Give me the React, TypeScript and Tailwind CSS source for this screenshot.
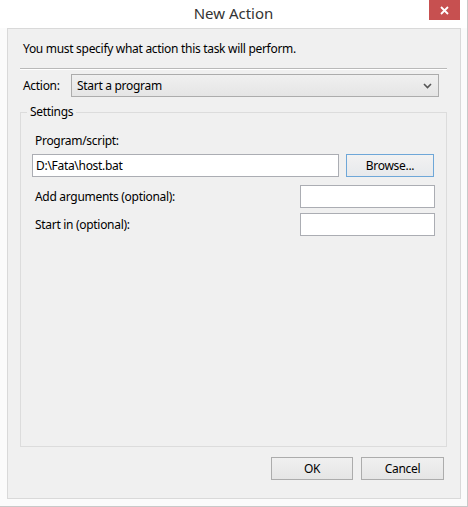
import React from "react";

const font = { fontFamily: '"Noto Sans", "Open Sans", Arial, sans-serif' };

const TextBox = ({ value = "", className = "" }: { value?: string; className?: string }) => (
  <div
    className={`h-[23px] border border-[#abadb3] bg-white px-[3px] flex items-center text-[12px] text-black ${className}`}
  >
    {value}
  </div>
);

const DialogButton = ({ label, focused = false, className = "" }: { label: string; focused?: boolean; className?: string }) => (
  <div
    className={`h-[23px] flex items-center justify-center text-[12px] text-black border ${
      focused
        ? "border-[#6ea7d8] bg-gradient-to-b from-[#f2f2f2] to-[#e7e9ec]"
        : "border-[#acacac] bg-gradient-to-b from-[#f0f0f0] to-[#e5e5e5]"
    } ${className}`}
  >
    {label}
  </div>
);

export default function App() {
  return (
    <div
      className="w-[468px] h-[507px] bg-[#fbfbfb] border-r border-b border-[#c9c9c9] flex flex-col tracking-[-0.3px]"
      style={font}
    >
      {/* Title bar */}
      <div className="relative h-[28px] shrink-0 flex items-center justify-center bg-white">
        <span className="text-[15px] text-[#333] leading-none pb-[2px] tracking-normal">New Action</span>
        <div className="absolute right-[7px] top-0 w-[31px] h-[20px] bg-[#c75050] flex items-center justify-center">
          <svg width="9" height="9" viewBox="0 0 9 9">
            <path d="M1 1 L8 8 M8 1 L1 8" stroke="white" strokeWidth="1.8" />
          </svg>
        </div>
      </div>

      {/* Client area */}
      <div className="ml-[7px] mr-[6px] h-[471px] border border-[#d9d9d9] bg-[#f0f0f0] flex flex-col">
        <div className="pl-[15px] pt-[12px] h-[30px] text-[12px] text-black leading-[16px]">
          You must specify what action this task will perform.
        </div>
        <div className="ml-[12px] mr-[13px] mt-[9px] border-t border-[#b9b9b9] border-b-[#fff] h-[2px] border-b" />

        {/* Action row */}
        <div className="mt-[4px] ml-[15px] mr-[21px] flex items-center gap-[7px]">
          <span className="text-[12px] text-black w-[41px]">Action:</span>
          <div className="flex-1 h-[23px] border border-[#acacac] bg-gradient-to-b from-[#f0f0f0] to-[#e5e5e5] flex items-center justify-between pl-[5px] pr-[6px] text-[12px] text-black">
            <span>Start a program</span>
            <svg width="9" height="6" viewBox="0 0 9 6">
              <path d="M1 1 L4.5 4.5 L8 1" stroke="#555" strokeWidth="1.6" fill="none" />
            </svg>
          </div>
        </div>

        {/* Settings group */}
        <fieldset className="mt-[7px] ml-[12px] mr-[13px] h-[343px] border border-[#dcdcdc] px-0">
          <legend className="ml-[6px] px-[3px] text-[12px] text-black leading-[16px]">Settings</legend>
          <div className="px-[11px]">
            <div className="pt-[13px] pl-[3px] text-[12px] text-black leading-[16px]">Program/script:</div>
            <div className="mt-[5px] flex items-center">
              <TextBox value="D:\Fata\host.bat" className="w-[307px]" />
              <DialogButton label="Browse..." focused className="ml-[7px] w-[88px]" />
            </div>
            <div className="mt-[8px] flex items-center">
              <span className="pl-[3px] w-[268px] text-[12px] text-black">Add arguments (optional):</span>
              <TextBox className="w-[135px]" />
            </div>
            <div className="mt-[5px] flex items-center">
              <span className="pl-[3px] w-[268px] text-[12px] text-black">Start in (optional):</span>
              <TextBox className="w-[135px]" />
            </div>
          </div>
        </fieldset>

        {/* Buttons */}
        <div className="mt-[10px] mr-[16px] flex justify-end gap-[8px]">
          <DialogButton label="OK" className="w-[82px]" />
          <DialogButton label="Cancel" className="w-[83px]" />
        </div>
      </div>
    </div>
  );
}
